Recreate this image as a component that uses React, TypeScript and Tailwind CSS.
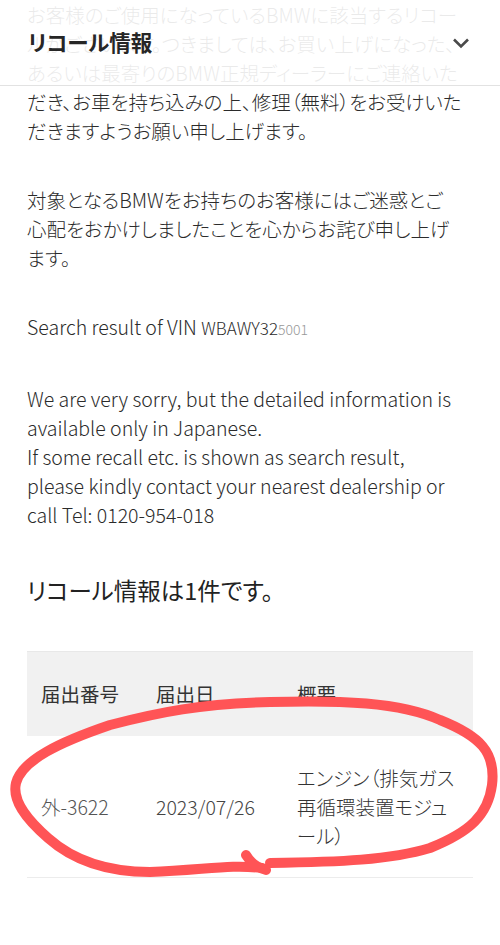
import React from "react";

const jp = "font-['Noto_Sans_CJK_JP','Noto_Sans',sans-serif]";

function Header() {
  return (
    <div className="absolute left-0 top-0 flex h-[86px] w-full items-center justify-between border-b border-[#e2e2e2] bg-white/90 pl-[28px] pr-[30px]">
      <span className={`${jp} text-[21.5px] font-bold text-[#262626]`}>リコール情報</span>
      <svg width="18" height="12" viewBox="0 0 18 12" fill="none">
        <path d="M2 2.5 L9 9.5 L16 2.5" stroke="#4a4a4a" strokeWidth="2.6" />
      </svg>
    </div>
  );
}

function Circle() {
  return (
    <svg
      className="pointer-events-none absolute left-0 top-0"
      width="500"
      height="945"
      viewBox="0 0 500 945"
      fill="none"
    >
      <path
        d="M262 868 C230 864 205 870 150 872 C110 872 75 862 48 838 C25 818 12 800 16 783 C22 760 60 742 110 725 C160 712 200 704 270 702 C340 700 400 702 440 720 C480 736 496 752 492 785 C488 815 470 832 430 848 C390 860 340 862 270 863"
        stroke="#ff5456"
        strokeWidth="10"
        strokeLinecap="round"
        strokeLinejoin="round"
      />
      <path d="M246 855 C250 862 258 868 266 870" stroke="#ff5456" strokeWidth="10" strokeLinecap="round" />
    </svg>
  );
}

function RecallTable() {
  return (
    <table className="mt-[45px] w-full border-collapse text-[19.5px] leading-[29px] text-[#333]">
      <thead>
        <tr className="h-[84px] border-t border-[#e8e8e8] bg-[#f1f1f1] text-left">
          <th className="w-[115px] pl-[14px] font-normal">届出番号</th>
          <th className="w-[141px] pl-[14px] font-normal">届出日</th>
          <th className="pl-[14px] font-normal">概要</th>
        </tr>
      </thead>
      <tbody>
        <tr className="h-[142px] border-b border-[#ececec]">
          <td className="pl-[14px] text-[#555]">外-3622</td>
          <td className="pl-[14px] text-[#444]">2023/07/26</td>
          <td className="whitespace-nowrap pl-[14px] pr-[14px]">
            エンジン（排気ガス
            <br />
            再循環装置モジュ
            <br />
            ール）
          </td>
        </tr>
      </tbody>
    </table>
  );
}

export default function App() {
  return (
    <div className={`relative h-[945px] w-[500px] overflow-hidden bg-white ${jp} [font-feature-settings:'palt']`}>
      <div className="px-[27px] text-[19.5px] font-light leading-[29px] text-[#2b2b2b]">
        <p className="whitespace-nowrap">
          お客様のご使用になっているBMWに該当するリコー
          <br />
          ルがございます。つきましては、お買い上げになった、
          <br />
          あるいは最寄りのBMW正規ディーラーにご連絡いた
          <br />
          だき、お車を持ち込みの上、修理（無料）をお受けいた
          <br />
          だきますようお願い申し上げます。
        </p>
        <p className="mt-[40px] whitespace-nowrap">
          対象となるBMWをお持ちのお客様にはご迷惑とご
          <br />
          心配をおかけしましたことを心からお詫び申し上げ
          <br />
          ます。
        </p>
        <p className="mt-[40px]">
          Search result of VIN <span className="text-[17px]">WBAWY32</span>
          <span className="text-[14px] text-[#999]">5001</span>
        </p>
        <p className="mt-[40px] whitespace-nowrap">
          We are very sorry, but the detailed information is
          <br />
          available only in Japanese.
          <br />
          If some recall etc. is shown as search result,
          <br />
          please kindly contact your nearest dealership or
          <br />
          call Tel: 0120-954-018
        </p>
        <h2 className="mt-[45px] text-[23.5px] font-normal leading-[32px] text-[#222]">リコール情報は1件です。</h2>
        <RecallTable />
      </div>
      <Header />
      <Circle />
    </div>
  );
}
